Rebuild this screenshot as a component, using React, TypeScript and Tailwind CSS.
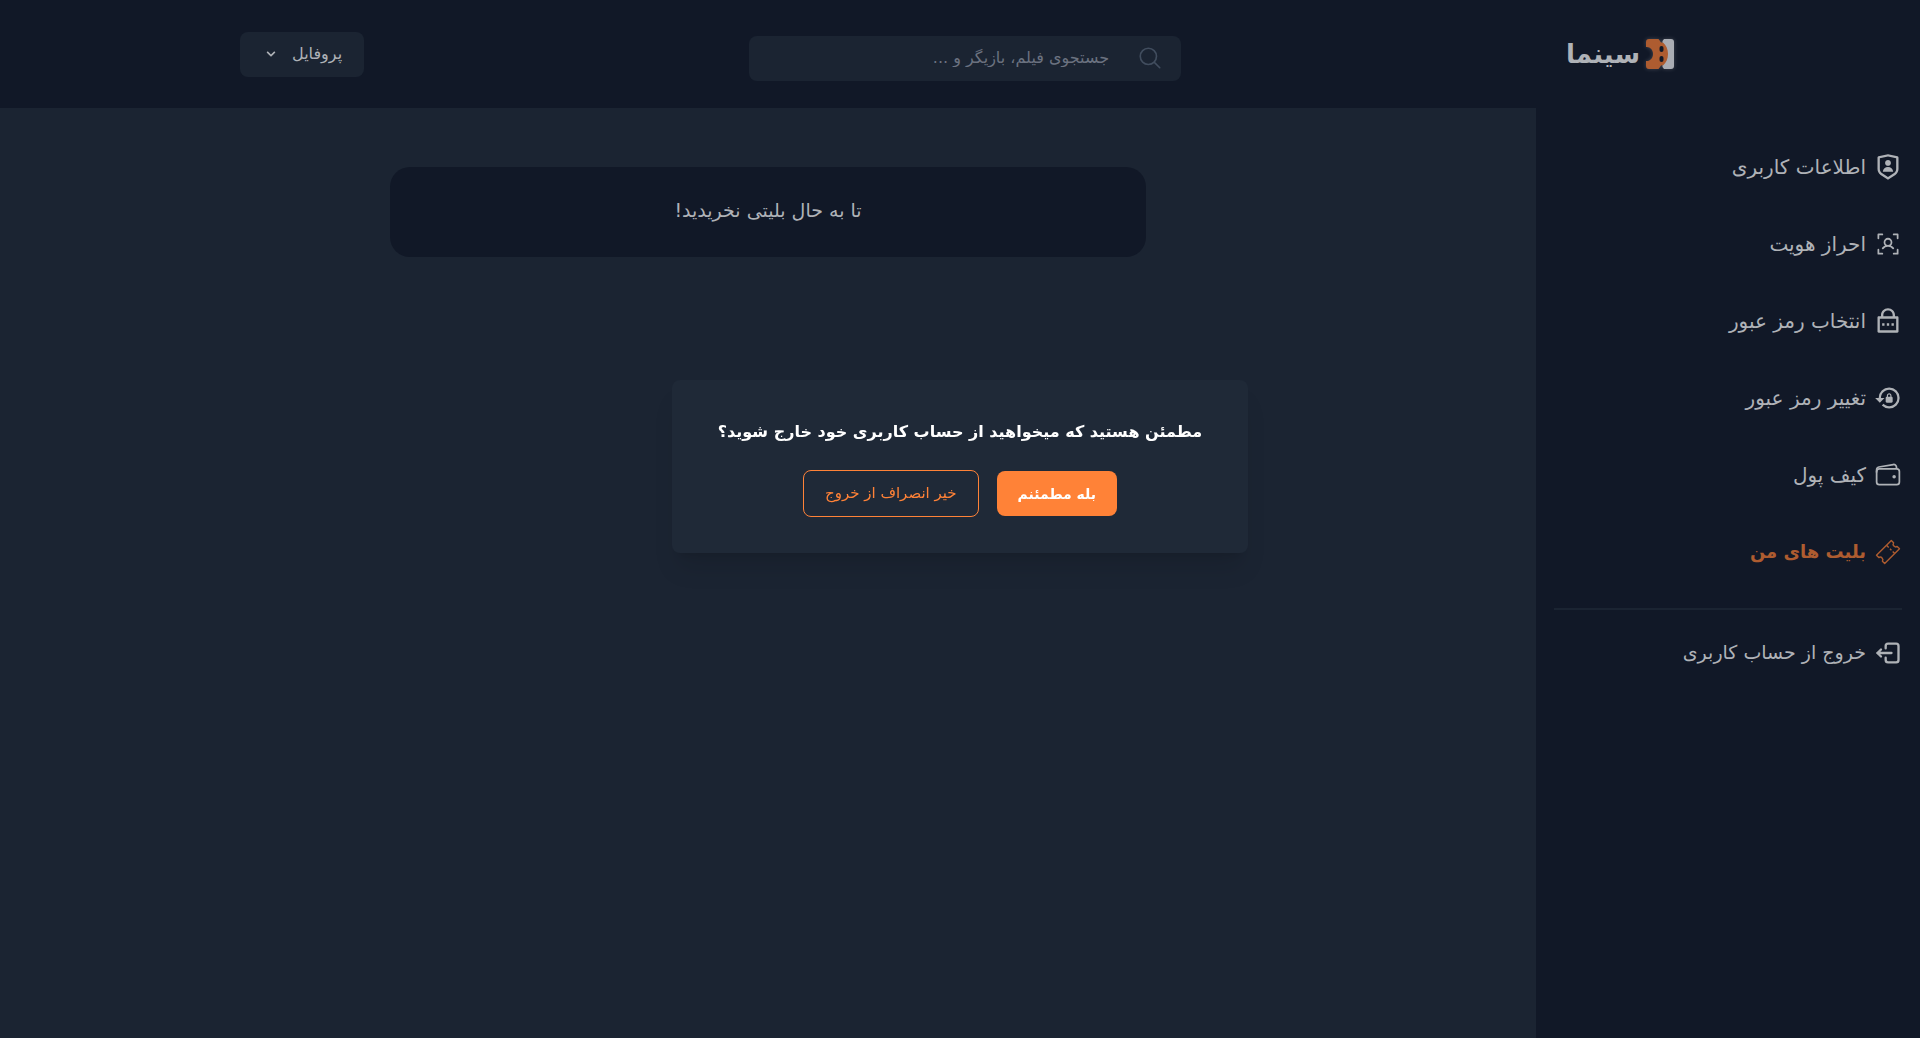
import { type ReactNode } from "react";
import { RiShieldUserLine, RiLockPasswordLine } from "react-icons/ri";
import { PiUserFocus } from "react-icons/pi";
import { MdLockReset } from "react-icons/md";
import { IoWalletOutline } from "react-icons/io5";
import { TbLogout2 } from "react-icons/tb";
import { HiOutlineMagnifyingGlass } from "react-icons/hi2";
import { FaChevronDown } from "react-icons/fa";

function Logo() {
  return (
    <svg
      viewBox="0 0 28 30"
      className="h-[30px] w-7 drop-shadow-[0_0_2px_rgba(255,255,255,0.2)]"
      aria-hidden="true"
    >
      <path fill="#a9acb3" d="M18 0h7a3 3 0 0 1 3 3v24a3 3 0 0 1-3 3h-7l-1.500-2V2z" />
      <path
        fill="#ae5c30"
        d="M3 0h9.500l1.500 2c.5 1.500 2 2 3 1.500 3 2.500 5 6.500 5 11.500s-2 9-5 11.500c-1-.5-2.500 0-3 1.500l-1.500 2H3a3 3 0 0 1-3-3v-5c4 .5 7-2.800 7-7s-3-7.500-7-7V3a3 3 0 0 1 3-3z"
      />
      <rect fill="#111827" x="13.500" y="7" width="4" height="6" rx="2" />
      <rect fill="#111827" x="13.500" y="17" width="4" height="6" rx="2" />
    </svg>
  );
}

function TicketIcon() {
  return (
    <svg viewBox="0 0 28 28" className="size-7" fill="none" stroke="currentColor" strokeWidth="1.400" strokeLinejoin="round" aria-hidden="true">
      <path d="M17.300 2.500l2.300 2.300a2.600 2.600 0 0 0 3.600 3.600l2.300 2.300L10.700 25.500l-2.300-2.300a2.600 2.600 0 0 0-3.600-3.600l-2.300-2.300z" />
      <path d="M12.500 7.300l2.200 2.200M16 10.800l1.400 1.400M18.700 13.500l2 2" />
    </svg>
  );
}

const menu: { label: string; icon: ReactNode; active?: boolean }[] = [
  { label: "اطلاعات کاربری", icon: <RiShieldUserLine size={28} /> },
  { label: "احراز هویت", icon: <PiUserFocus size={28} /> },
  { label: "انتخاب رمز عبور", icon: <RiLockPasswordLine size={28} /> },
  { label: "تغییر رمز عبور", icon: <MdLockReset size={28} /> },
  { label: "کیف پول", icon: <IoWalletOutline size={28} /> },
  { label: "بلیت های من", icon: <TicketIcon />, active: true },
];

export default function App() {
  return (
    <div
      dir="rtl"
      className="flex min-h-[calc(100vh-1px)] flex-col bg-[#111827] font-['DejaVu_Sans',sans-serif] text-[#afb2b7]"
    >
      <header className="mx-auto flex h-[108px] w-3/4 items-center justify-between">
        <a href="#home" className="flex items-center gap-1.5 ps-1.5">
          <Logo />
          <span className="text-[26px] font-bold">سینما</span>
        </a>
        <label className="mt-2 flex h-[45px] w-[30%] items-center gap-7 rounded-lg bg-[#1b2432] px-[18px]">
          <HiOutlineMagnifyingGlass size={26} className="shrink-0 text-[#414d5e]" />
          <input
            type="search"
            aria-label="جستجو"
            placeholder="جستجوی فیلم، بازیگر و ..."
            className="min-w-0 flex-1 bg-transparent text-base outline-none placeholder:text-[#6b7280]"
          />
        </label>
        <button
          type="button"
          className="flex h-[45px] items-center gap-4 rounded-lg bg-[#1b2432] ps-[22px] pe-[26px] text-base"
        >
          پروفایل
          <FaChevronDown size={10} />
        </button>
      </header>

      <div className="flex flex-1">
        <aside className="w-1/5 px-[18px] pt-[34px]">
          <nav>
            <ul className="flex flex-col gap-7">
              {menu.map((item) => (
                <li key={item.label}>
                  <a
                    href="#menu"
                    className={
                      item.active
                        ? "flex h-[49px] items-center gap-2 text-lg font-bold text-[#ae5c30]"
                        : "flex h-[49px] items-center gap-2 text-xl"
                    }
                  >
                    {item.icon}
                    {item.label}
                  </a>
                </li>
              ))}
            </ul>
            <hr className="mt-8 border-t-2 border-[#1b2432]" />
            <button type="button" className="mt-[18px] flex h-[49px] items-center gap-2 text-[19px]">
              <TbLogout2 size={28} />
              خروج از حساب کاربری
            </button>
          </nav>
        </aside>
        <main className="flex-1 bg-[#1b2432] pt-[59px]">
          <section className="mx-auto flex h-[90px] w-[756px] max-w-full items-center justify-center rounded-[20px] bg-[#111827] pb-1">
            <p className="text-[19px]">تا به حال بلیتی نخریدید!</p>
          </section>
        </main>
      </div>

      <div
        role="dialog"
        aria-modal="true"
        aria-labelledby="logout-title"
        className="fixed left-1/2 top-[380px] flex w-[576px] -translate-x-1/2 flex-col items-center rounded-lg bg-[#1f2937] pt-10 pb-9 shadow-xl"
      >
        <h2 id="logout-title" className="text-base font-bold text-white">
          مطمئن هستید که میخواهید از حساب کاربری خود خارج شوید؟
        </h2>
        <div className="mt-[26px] flex items-center gap-[18px]">
          <button type="button" className="h-[45px] rounded-lg bg-[#ff8237] px-[21px] text-sm font-bold text-white">
            بله مطمئنم
          </button>
          <button
            type="button"
            className="h-[47px] rounded-lg border border-[#ff8237] px-[21px] text-[15px] text-[#ff8237]"
          >
            خیر انصراف از خروج
          </button>
        </div>
      </div>
    </div>
  );
}
